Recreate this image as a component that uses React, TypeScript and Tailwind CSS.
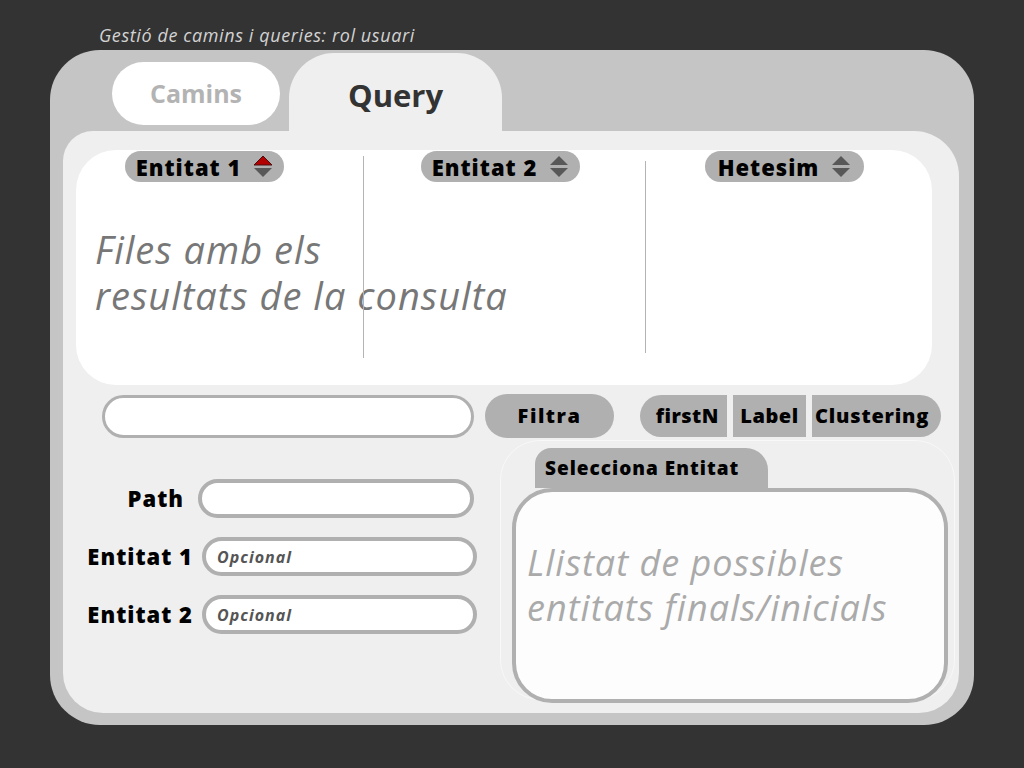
import React from 'react'

const font = { fontFamily: '"Open Sans", "DejaVu Sans", sans-serif' }

function Spinner({ active = false }: { active?: boolean }) {
  return (
    <svg width="20" height="24" viewBox="0 0 20 24" className="shrink-0">
      <path
        d="M10 1 L19 10 L1 10 Z"
        fill={active ? '#b30000' : '#585858'}
        stroke={active ? '#4a1010' : 'none'}
        strokeWidth="1"
      />
      <path d="M1 13 L19 13 L10 22 Z" fill="#585858" />
    </svg>
  )
}

function ColumnPill({ label, active }: { label: string; active?: boolean }) {
  return (
    <div className="w-[159px] h-[31px] rounded-full bg-[#b0b0b0] flex items-center justify-center gap-[12px]">
      <span className="text-[22px] font-extrabold tracking-[1px] text-black leading-none">{label}</span>
      <Spinner active={active} />
    </div>
  )
}

function FieldRow({
  label,
  placeholder,
  inputWidth,
  gap,
}: {
  label: string
  placeholder?: string
  inputWidth: string
  gap: string
}) {
  return (
    <div className={`flex items-center justify-end ${gap}`}>
      <span className="text-[22px] font-extrabold tracking-[1px] text-black">{label}</span>
      <div
        className={`${inputWidth} h-[39px] rounded-full border-4 border-[#b0b0b0] bg-white flex items-center pl-[11px]`}
      >
        {placeholder && (
          <span className="text-[16px] italic font-bold tracking-[1px] text-[#555555]">{placeholder}</span>
        )}
      </div>
    </div>
  )
}

export default function App() {
  return (
    <div className="w-[1024px] h-[768px] bg-[#333333] pt-[21px] px-[50px]" style={font}>
      <p className="ml-[49px] h-[29px] italic text-[18px] tracking-[0.6px] text-[#d2d2d2] leading-[29px]">
        Gestió de camins i queries: rol usuari
      </p>

      <div className="h-[675px] bg-[#c5c5c5] rounded-[50px] pl-[13px] pr-[15px] pb-[12px] flex flex-col">
        {/* tabs */}
        <div className="h-[81px] flex items-start gap-[9px] pl-[49px] pt-[3px] shrink-0">
          <div className="mt-[9px] w-[168px] h-[63px] rounded-full bg-white flex items-center justify-center">
            <span className="text-[25px] font-bold text-[#b3b3b3]">Camins</span>
          </div>
          <div className="w-[213px] h-[79px] rounded-t-[45px] bg-[#efefef] flex items-center justify-center pt-[6px]">
            <span className="text-[31px] font-bold text-[#333333]">Query</span>
          </div>
        </div>

        {/* main panel */}
        <div className="flex-1 bg-[#efefef] rounded-tl-[30px] rounded-tr-[45px] rounded-b-[40px] flex flex-col">
          {/* results */}
          <div className="mt-[19px] ml-[13px] mr-[27px] h-[235px] bg-white rounded-[40px] flex shrink-0">
            <div className="w-[287px] pl-[49px] pt-px flex flex-col">
              <ColumnPill label="Entitat 1" active />
              <div className="mt-[44px] -ml-[30px] whitespace-nowrap italic text-[38px] tracking-[1px] text-[#777777]">
                <span className="block h-[46px] leading-[46px]">Files amb els</span>
                <span className="block h-[46px] leading-[46px]">resultats de la consulta</span>
              </div>
            </div>
            <div className="w-px bg-[#b4b4b4] mt-[6px] h-[202px]" />
            <div className="w-[281px] pl-[57px] pt-px">
              <ColumnPill label="Entitat 2" />
            </div>
            <div className="w-px bg-[#b4b4b4] mt-[11px] h-[192px]" />
            <div className="flex-1 pl-[59px] pt-px">
              <ColumnPill label="Hetesim" />
            </div>
          </div>

          {/* filter row */}
          <div className="mt-[8px] h-[45px] flex items-center pl-[39px] shrink-0">
            <div className="w-[372px] h-[43px] rounded-full border-[3px] border-[#b0b0b0] bg-white mt-[2px]" />
            <div className="ml-[11px] w-[129px] h-[44px] rounded-full bg-[#b0b0b0] flex items-center justify-center">
              <span className="text-[20px] font-extrabold tracking-[1.5px] text-black">Filtra</span>
            </div>
            <div className="ml-[26px] h-[42px] flex gap-[6px]">
              <div className="w-[87px] rounded-l-full bg-[#b0b0b0] flex items-center justify-end pr-[8px]">
                <span className="text-[20px] font-extrabold tracking-[0.5px] text-black">firstN</span>
              </div>
              <div className="w-[73px] bg-[#b0b0b0] flex items-center justify-center">
                <span className="text-[20px] font-extrabold tracking-[0.5px] text-black">Label</span>
              </div>
              <div className="w-[129px] rounded-r-full bg-[#b0b0b0] flex items-center pl-[3px]">
                <span className="text-[20px] font-extrabold tracking-[0.8px] text-black">Clustering</span>
              </div>
            </div>
          </div>

          {/* bottom */}
          <div className="mt-[2px] flex flex-1">
            <div className="w-[437px] pt-[39px] flex flex-col gap-[19px]">
              <div className="pr-[26px]">
                <FieldRow label="Path" inputWidth="w-[276px]" gap="gap-[14px]" />
              </div>
              <div className="pr-[23px]">
                <FieldRow label="Entitat 1" placeholder="Opcional" inputWidth="w-[275px]" gap="gap-[9px]" />
              </div>
              <div className="pr-[23px]">
                <FieldRow label="Entitat 2" placeholder="Opcional" inputWidth="w-[275px]" gap="gap-[9px]" />
              </div>
            </div>

            <div className="w-[455px] h-[260px] rounded-[40px] border border-[#f8f8f8] pl-[11px] pt-[7px]">
              <div className="ml-[23px] w-[233px] h-[40px] rounded-tl-[16px] rounded-tr-[22px] bg-[#b0b0b0] flex items-center pl-[10px]">
                <span className="text-[19px] font-extrabold text-black tracking-[1px]">Selecciona Entitat</span>
              </div>
              <div className="w-[436px] h-[215px] rounded-[40px] border-4 border-[#b0b0b0] bg-[#fdfdfd] pl-[11px] pt-[48px]">
                <div className="italic text-[36px] tracking-[1px] text-[#aaaaaa] whitespace-nowrap">
                  <span className="block h-[45px] leading-[45px]">Llistat de possibles</span>
                  <span className="block h-[45px] leading-[45px]">entitats finals/inicials</span>
                </div>
              </div>
            </div>
          </div>
        </div>
      </div>
    </div>
  )
}
